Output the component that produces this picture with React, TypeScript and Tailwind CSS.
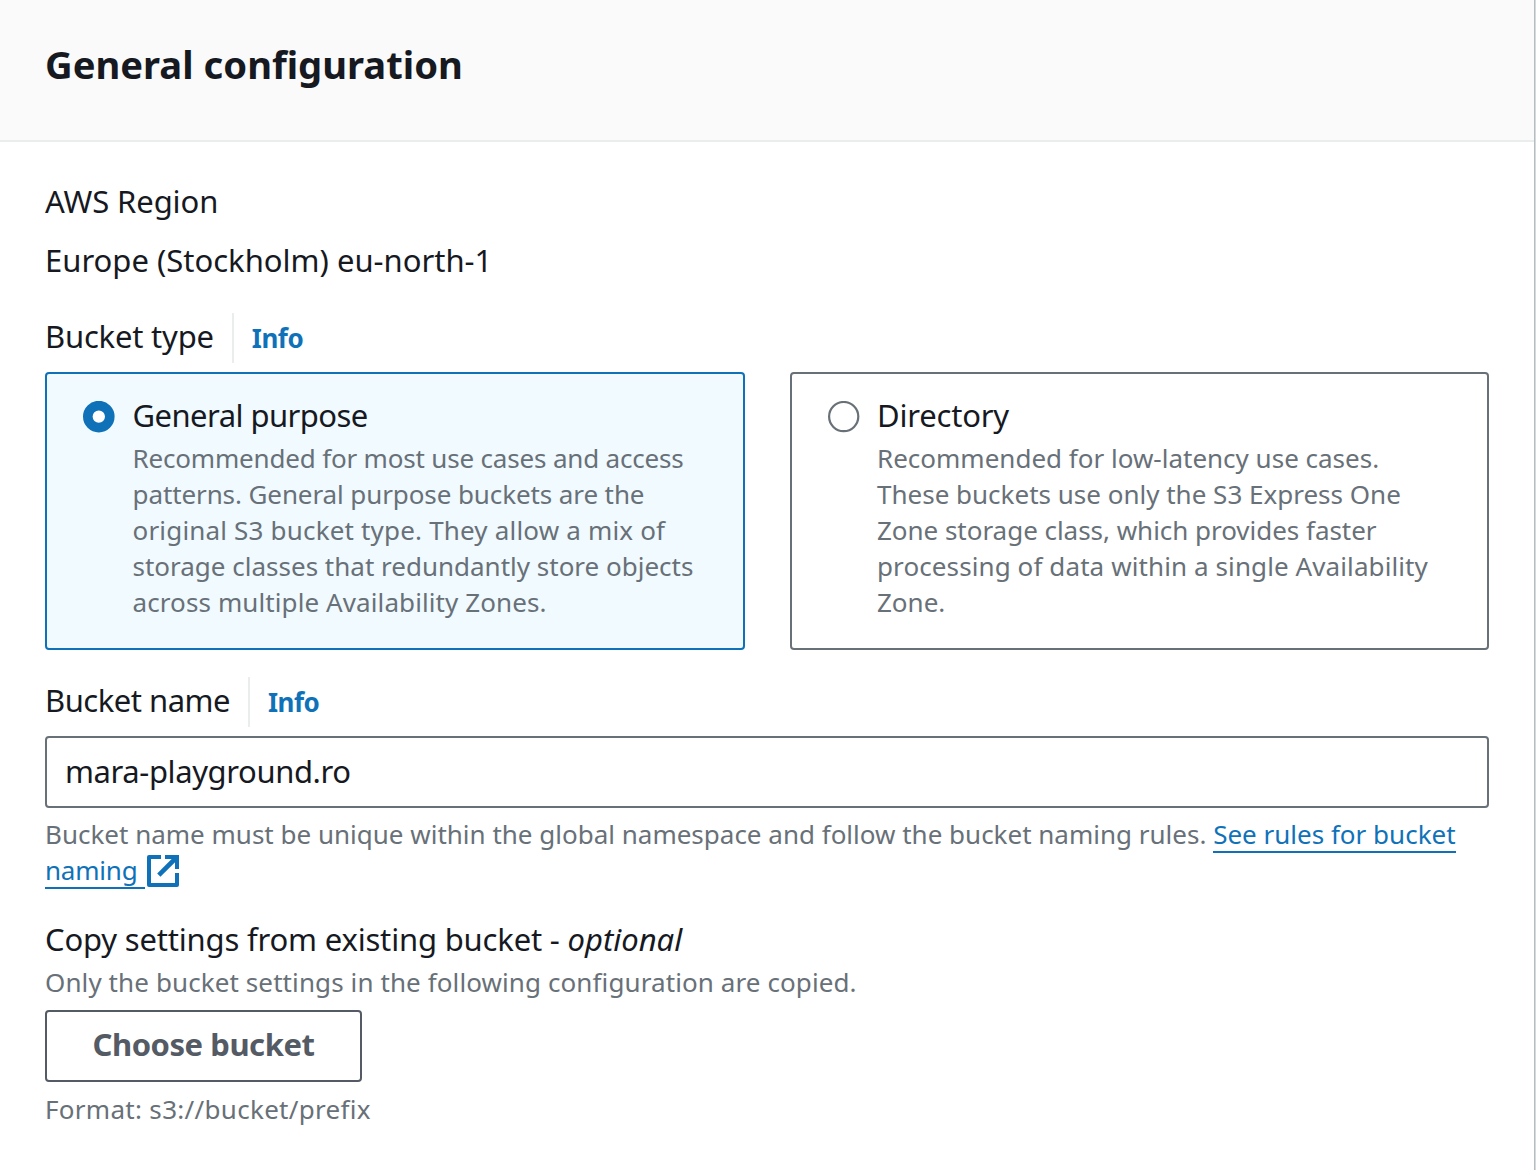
import type { ReactNode } from "react";

function InfoLabel({ children, tracking }: { children: ReactNode; tracking: string }) {
  return (
    <div className="flex h-[50px]">
      <span className={"text-[31px] leading-[46px] " + tracking}>{children}</span>
      <a className="ml-[18px] border-l-2 border-[#eaeded] pl-[18px] text-[26px] leading-[50px] font-bold tracking-[-0.5px] text-[#0f72b9]">
        Info
      </a>
    </div>
  );
}

function Tile({
  title,
  selected = false,
  titleClass = "",
  lines,
}: {
  title: string;
  selected?: boolean;
  titleClass?: string;
  lines: [string, string][];
}) {
  return (
    <div
      className={
        "flex h-[278px] items-start rounded-[4px] border-2 pt-[19px] pl-9 " +
        (selected ? "border-[#0f72b9] bg-[#f1faff]" : "border-[#687078] bg-white")
      }
    >
      <svg className="mt-2 size-8 shrink-0" viewBox="0 0 32 32">
        {selected ? (
          <circle cx="15.8" cy="15.6" r="11" fill="#fff" stroke="#0f72b9" strokeWidth="9.6" />
        ) : (
          <circle cx="15.7" cy="15.6" r="14.6" fill="#fff" stroke="#687078" strokeWidth="2.2" />
        )}
      </svg>
      <div className="ml-[17.5px] whitespace-nowrap">
        <div className={"text-[31px] leading-[44px] " + titleClass}>{title}</div>
        <div className="mt-[3px] text-[26px] leading-9 text-[#687078]">
          {lines.map(([text, tracking]) => (
            <div key={text} className={tracking}>
              {text}
            </div>
          ))}
        </div>
      </div>
    </div>
  );
}

function ExternalIcon() {
  return (
    <svg
      className="ml-[2px] inline-block size-8 align-[-7px]"
      viewBox="0 0 32 32"
      fill="none"
      stroke="#0f72b9"
      strokeWidth="4"
    >
      <path d="M14 2H2V30H30V18" strokeLinejoin="round" />
      <path d="M18 2H30V14" />
      <path d="M11.8 20.2L29 3" strokeWidth="4.6" />
    </svg>
  );
}

export default function App() {
  return (
    <div className="flex h-[1170px] w-[1536px] overflow-hidden bg-white font-['Noto_Sans',sans-serif] text-[#16191f]">
      <main className="w-[1534px] shrink-0">
        <header className="h-[142px] border-b-2 border-[#eaeded] bg-[#fafafa] pt-[39px] pl-[45px]">
          <h1 className="text-[38.2px] leading-[50px] font-bold">General configuration</h1>
        </header>

        <div className="flex w-[1489px] flex-col pt-[37px] pl-[45px]">
          <div className="text-[31px] leading-[44px] tracking-[-0.1px]">AWS Region</div>
          <div className="mt-[15px] mb-[31px] text-[31px] leading-[44px]">Europe (Stockholm) eu-north-1</div>

          <InfoLabel tracking="tracking-[-0.2px]">Bucket type</InfoLabel>
          <div className="mt-[9px] mb-[27px] grid grid-cols-2 gap-[45px]">
            <Tile
              title="General purpose"
              selected
              titleClass="tracking-[-0.55px]"
              lines={[
                ["Recommended for most use cases and access", "tracking-[-0.18px]"],
                ["patterns. General purpose buckets are the", "tracking-[-0.1px]"],
                ["original S3 bucket type. They allow a mix of", "tracking-[0.18px]"],
                ["storage classes that redundantly store objects", ""],
                ["across multiple Availability Zones.", "tracking-[0.1px]"],
              ]}
            />
            <Tile
              title="Directory"
              titleClass="tracking-[-0.2px]"
              lines={[
                ["Recommended for low-latency use cases.", ""],
                ["These buckets use only the S3 Express One", ""],
                ["Zone storage class, which provides faster", "tracking-[-0.03px]"],
                ["processing of data within a single Availability", "tracking-[0.1px]"],
                ["Zone.", ""],
              ]}
            />
          </div>

          <InfoLabel tracking="tracking-[-0.5px]">Bucket name</InfoLabel>
          <div className="mt-[9px] h-[72px] rounded-[4px] border-2 border-[#687078] pl-[18px] text-[31px] leading-[66px] tracking-[-0.4px]">
            mara-playground.ro
          </div>
          <p className="mt-2 h-[72px] text-[26px] leading-9 whitespace-nowrap text-[#687078]">
            Bucket name must be unique within the global namespace and follow the bucket naming rules.{" "}
            <a className="text-[#0f72b9]">
              <span className="-mb-px inline-block h-[37px] border-b-2 border-[#0f72b9] align-top">
                See rules for bucket
              </span>
              <br />
              <span className="-mb-px inline-block h-[37px] border-b-2 border-[#0f72b9] pr-[7px] align-top tracking-[-0.2px]">
                naming
              </span>
              <ExternalIcon />
            </a>
          </p>

          <div className="mt-[29px] text-[31px] leading-[44px]">
            <span className="tracking-[-0.18px]">Copy settings from existing bucket - </span>
            <i>optional</i>
          </div>
          <div className="mt-[3px] text-[26px] leading-9 tracking-[0.1px] text-[#687078]">
            Only the bucket settings in the following configuration are copied.
          </div>
          <button className="mt-[10px] h-[72px] w-[317px] rounded-[4px] border-2 border-[#545b64] pb-1 text-[31px] leading-[64px] font-bold tracking-[-0.45px] text-[#545b64]">
            Choose bucket
          </button>
          <div className="mt-[9px] text-[26px] leading-9 tracking-[0.3px] text-[#687078]">
            Format: s3://bucket/prefix
          </div>
        </div>
      </main>
      <div className="w-px bg-[#b6bdc0]" />
      <div className="w-px bg-[#d5dbdb]" />
    </div>
  );
}
